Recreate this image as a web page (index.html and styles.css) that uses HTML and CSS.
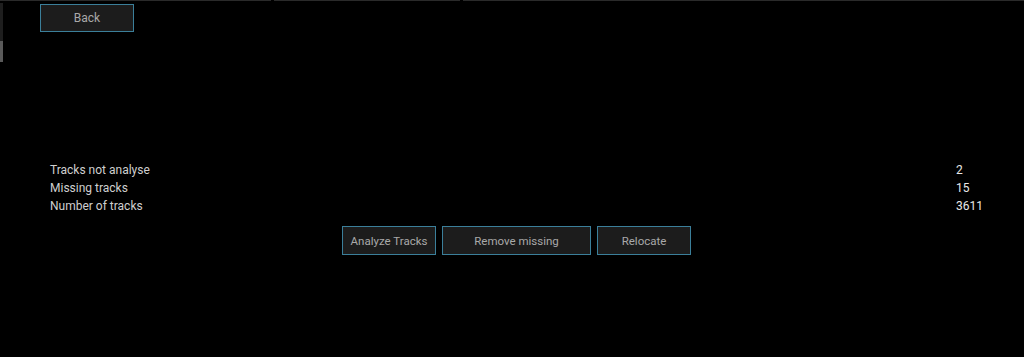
FILE: index.html
```html
<!DOCTYPE html>
<html lang="en">
<head>
  <meta charset="UTF-8">
  <title>Library</title>
  <link rel="stylesheet" href="styles.css">
</head>
<body>

<div class="top-strip">
  <span class="seg seg-a"></span>
  <span class="seg seg-b"></span>
  <span class="seg seg-c"></span>
</div>

<div class="side-edge">
  <span class="edge-dark"></span>
  <span class="edge-light"></span>
</div>

<div class="page">
  <div class="header">
    <button class="btn back-btn">Back</button>
  </div>

  <div class="stats">
    <div class="stat-row">
      <span class="stat-label">Tracks not analyse</span>
      <span class="stat-value">2</span>
    </div>
    <div class="stat-row">
      <span class="stat-label">Missing tracks</span>
      <span class="stat-value">15</span>
    </div>
    <div class="stat-row">
      <span class="stat-label">Number of tracks</span>
      <span class="stat-value">3611</span>
    </div>
  </div>

  <div class="actions">
    <button class="btn action-btn">Analyze Tracks</button>
    <button class="btn action-btn wide">Remove missing</button>
    <button class="btn action-btn">Relocate</button>
  </div>
</div>

</body>
</html>
```

FILE: styles.css
```css
html, body {
  margin: 0;
  padding: 0;
  background-color: #000;
  height: 100%;
}
body {
  font-family: Roboto, 'Liberation Sans', sans-serif;
  color: #cfcfcf;
  position: relative;
  overflow: hidden;
}
.top-strip {
  display: flex;
  gap: 3px;
  height: 1px;
}
.seg {
  background-color: #2a2a2a;
  height: 1px;
}
.seg-a { width: 271px; }
.seg-b { width: 186px; }
.seg-c { flex: 1; }
.side-edge {
  position: absolute;
  left: 0;
  top: 3px;
  width: 3px;
  display: flex;
  flex-direction: column;
}
.edge-dark {
  height: 38px;
  background-color: #1e1e1e;
}
.edge-light {
  height: 21px;
  background-color: #5a5a5a;
}
.page {
  display: flex;
  flex-direction: column;
}
.header {
  padding: 3px 0 0 40px;
}
.btn {
  background-color: #1c1c1c;
  color: #a9a9a9;
  border: 1px solid #3b7f9a;
  font-family: Roboto, 'Liberation Sans', sans-serif;
  font-size: 11.5px;
  padding: 0;
  cursor: pointer;
}
.back-btn {
  width: 94px;
  height: 28px;
  font-size: 12px;
}
.stats {
  margin-top: 129px;
  padding: 0 28px 0 50px;
  font-size: 12px;
  line-height: 18px;
}
.stat-row {
  display: grid;
  grid-template-columns: 1fr 40px;
}
.stat-value {
  color: #e8e8e8;
}
.actions {
  display: flex;
  justify-content: center;
  gap: 6px;
  margin-top: 11px;
  padding-left: 9px;
}
.action-btn {
  width: 94px;
  height: 29px;
}
.action-btn.wide {
  width: 149px;
}
```
